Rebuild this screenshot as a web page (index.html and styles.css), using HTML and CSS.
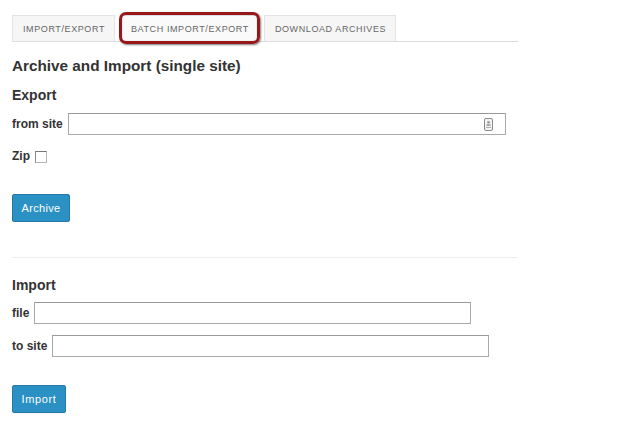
FILE: index.html
```html
<!DOCTYPE html>
<html>
<head>
<meta charset="utf-8">
<link rel="stylesheet" href="styles.css">
</head>
<body>
<div class="page">
  <ul class="tabs">
    <li class="tab">IMPORT/EXPORT</li>
    <li class="tab tab-active">BATCH IMPORT/EXPORT</li>
    <li class="tab">DOWNLOAD ARCHIVES</li>
  </ul>

  <h2 class="title">Archive and Import (single site)</h2>

  <h3 class="section">Export</h3>
  <div class="row row-from">
    <label class="label">from site</label>
    <div class="input input-from">
      <svg class="card-icon" width="9" height="13" viewBox="0 0 9 13">
        <rect x="0.5" y="0.5" width="8" height="12" rx="1.5" fill="#f4f4f4" stroke="#8a8a8a"/>
        <circle cx="4.5" cy="4.3" r="1.4" fill="#9a9a9a"/>
        <rect x="2.5" y="6.3" width="4" height="1.6" fill="#9a9a9a"/>
        <rect x="2" y="9" width="5" height="1" fill="#b0b0b0"/>
      </svg>
    </div>
  </div>
  <div class="row row-zip">
    <label class="label">Zip</label>
    <span class="checkbox"></span>
  </div>
  <button class="btn btn-archive">Archive</button>

  <div class="divider"></div>

  <h3 class="section section-import">Import</h3>
  <div class="row row-file">
    <label class="label">file</label>
    <div class="input input-file"></div>
  </div>
  <div class="row row-to">
    <label class="label">to site</label>
    <div class="input input-to"></div>
  </div>
  <button class="btn btn-import">Import</button>
</div>
</body>
</html>
```

FILE: styles.css
```css
* { box-sizing: border-box; }
html, body { margin: 0; padding: 0; background: #fff; }
body { font-family: "Liberation Sans", Arial, sans-serif; color: #333; }
.page { padding: 15px 0 0 12px; width: 518px; }

.tabs {
  list-style: none;
  margin: 0;
  padding: 0;
  display: flex;
  gap: 5px;
  height: 27px;
  border-bottom: 1px solid #dddddd;
}
.tab {
  height: 26px;
  padding: 0 9px 0 10px;
  display: flex;
  align-items: center;
  font-size: 9px;
  letter-spacing: 0.6px;
  color: #666;
  background: #f6f6f6;
  border: 1px solid #e3e3e3;
  border-bottom: none;
}
.tab-active {
  position: relative;
  background: #fafafa;
}
.tab-active::after {
  content: "";
  position: absolute;
  left: -2px;
  top: -4px;
  right: -2px;
  bottom: -3px;
  border: 3.5px solid #98181a;
  border-radius: 7px;
  box-shadow: 1px 1px 2px rgba(0,0,0,0.5), inset 0 0 1px rgba(0,0,0,0.4);
}

.title {
  margin: 15px 0 0;
  font-size: 15.3px;
  line-height: 18px;
  font-weight: bold;
}
.section {
  margin: 12px 0 0;
  font-size: 14px;
  line-height: 17px;
  font-weight: bold;
}
.row {
  display: flex;
  align-items: center;
  gap: 4px;
}
.label {
  font-size: 12px;
  font-weight: bold;
  color: #333;
}
.input {
  height: 22px;
  border: 1px solid #a9a9a9;
  border-top-color: #999;
  background: #fff;
  position: relative;
  display: flex;
  align-items: center;
  justify-content: flex-end;
}
.row-from { margin-top: 9px; gap: 5px; }
.input-from { width: 438px; }
.card-icon { margin-right: 12px; }
.row-zip { margin-top: 14px; gap: 5px; }
.checkbox {
  width: 12px;
  height: 12px;
  border: 1px solid #b5b5b5;
  border-top-color: #777;
  border-left-color: #888;
  background: #fff;
  margin-top: 1px;
}
.btn {
  display: block;
  height: 28px;
  background: #2b90c3;
  border: 1px solid #2578a4;
  border-radius: 2px;
  color: #fff;
  font-family: "Liberation Sans", Arial, sans-serif;
  font-size: 11px;
  letter-spacing: 0.3px;
  padding: 0;
}
.btn-archive { width: 58px; margin-top: 31px; }
.divider {
  margin-top: 35px;
  height: 1px;
  width: 506px;
  background: #eeeeee;
}
.section-import { margin-top: 19px; }
.row-file { margin-top: 8px; gap: 5px; }
.input-file { width: 437px; }
.row-to { margin-top: 11px; gap: 5px; }
.input-to { width: 437px; }
.btn-import { width: 54px; margin-top: 28px; letter-spacing: 0.6px; }
```
